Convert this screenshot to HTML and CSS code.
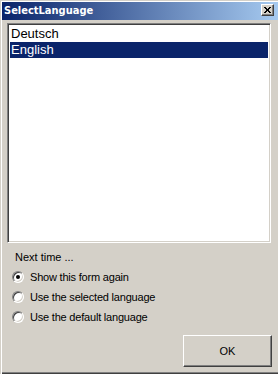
FILE: index.html
```html
<!DOCTYPE html>
<html lang="en">
<head>
    <meta charset="UTF-8">
    <title>SelectLanguage</title>
    <link rel="stylesheet" href="styles.css">
</head>
<body>
    <div class="window">
        <div class="title-bar">
            <div class="title">SelectLanguage</div>
            <div class="close-button">
                <svg width="7" height="6" viewBox="0 0 7 6">
                    <path d="M0,0 L6,6 M1,0 L7,6 M6,0 L0,6 M7,0 L1,6" stroke="#000" stroke-width="1" fill="none" shape-rendering="crispEdges"/>
                </svg>
            </div>
        </div>
        <div class="content">
            <div class="list-box">
                <div class="list-item">Deutsch</div>
                <div class="list-item selected">English</div>
            </div>
            <div class="group-label">Next time ...</div>
            <div class="radio-row">
                <div class="radio checked"></div>
                <div class="radio-label">Show this form again</div>
            </div>
            <div class="radio-row">
                <div class="radio"></div>
                <div class="radio-label">Use the selected language</div>
            </div>
            <div class="radio-row">
                <div class="radio"></div>
                <div class="radio-label">Use the default language</div>
            </div>
            <div class="button-row">
                <div class="ok-button">OK</div>
            </div>
        </div>
    </div>
</body>
</html>
```

FILE: styles.css
```css
body {
    margin: 0;
    padding: 0;
    font-family: "Liberation Sans", Arial, sans-serif;
    background-color: #d4d0c8;
}
.window {
    width: 278px;
    height: 374px;
    box-sizing: border-box;
    background-color: #d4d0c8;
    padding: 2px 0 2px 2px;
    box-shadow: inset 1px 1px 0 #d4d0c8, inset 2px 2px 0 #fff, inset 0 -1px 0 #404040, inset 0 -2px 0 #808080;
    display: flex;
    flex-direction: column;
}
.title-bar {
    height: 18px;
    background: linear-gradient(to right, #0a246a, #a6caf0);
    display: flex;
    justify-content: space-between;
    align-items: flex-start;
    padding: 0 4px 0 2px;
}
.title {
    color: white;
    font-family: "DejaVu Sans Condensed", "DejaVu Sans", sans-serif;
    font-weight: bold;
    font-size: 11px;
    line-height: 18px;
}
.close-button {
    width: 11px;
    height: 10px;
    margin-top: 2px;
    background-color: #d4d0c8;
    border: 1px solid;
    border-color: #fff #404040 #404040 #fff;
    box-shadow: inset -1px -1px 0 #808080;
    display: flex;
    justify-content: center;
    align-items: center;
}
.content {
    flex: 1;
    display: flex;
    flex-direction: column;
    padding: 3px 7px 0 5px;
    font-size: 11px;
    color: #000;
}
.list-box {
    height: 220px;
    box-sizing: border-box;
    background-color: white;
    border: 1px solid;
    border-color: #808080 #fff #fff #808080;
    box-shadow: inset 1px 1px 0 #404040, inset -1px -1px 0 #d4d0c8;
    padding: 2px;
}
.list-item {
    height: 16px;
    line-height: 16px;
    font-size: 13px;
    padding-left: 1px;
}
.list-item.selected {
    background-color: #0a246a;
    color: white;
}
.group-label {
    margin-top: 4px;
    padding-left: 8px;
    line-height: 20px;
}
.radio-row {
    height: 20px;
    display: flex;
    align-items: center;
    padding-left: 5px;
    gap: 6px;
}
.radio-label {
    letter-spacing: -0.2px;
}
.radio {
    width: 12px;
    height: 12px;
    box-sizing: border-box;
    border-radius: 50%;
    border: 1px solid;
    border-color: #808080 #fff #fff #808080;
    box-shadow: inset 1px 1px 0 #404040, inset -1px -1px 0 #d4d0c8;
    background-color: white;
    position: relative;
}
.radio.checked::after {
    content: "";
    position: absolute;
    left: 3px;
    top: 3px;
    width: 4px;
    height: 4px;
    border-radius: 50%;
    background-color: #000;
}
.button-row {
    display: flex;
    justify-content: flex-end;
    margin-top: 8px;
    margin-right: -1px;
}
.ok-button {
    width: 89px;
    height: 32px;
    box-sizing: border-box;
    border: 1px solid;
    border-color: #fff #404040 #404040 #fff;
    box-shadow: inset -1px -1px 0 #808080;
    display: flex;
    justify-content: center;
    align-items: center;
    font-size: 11px;
}
```
